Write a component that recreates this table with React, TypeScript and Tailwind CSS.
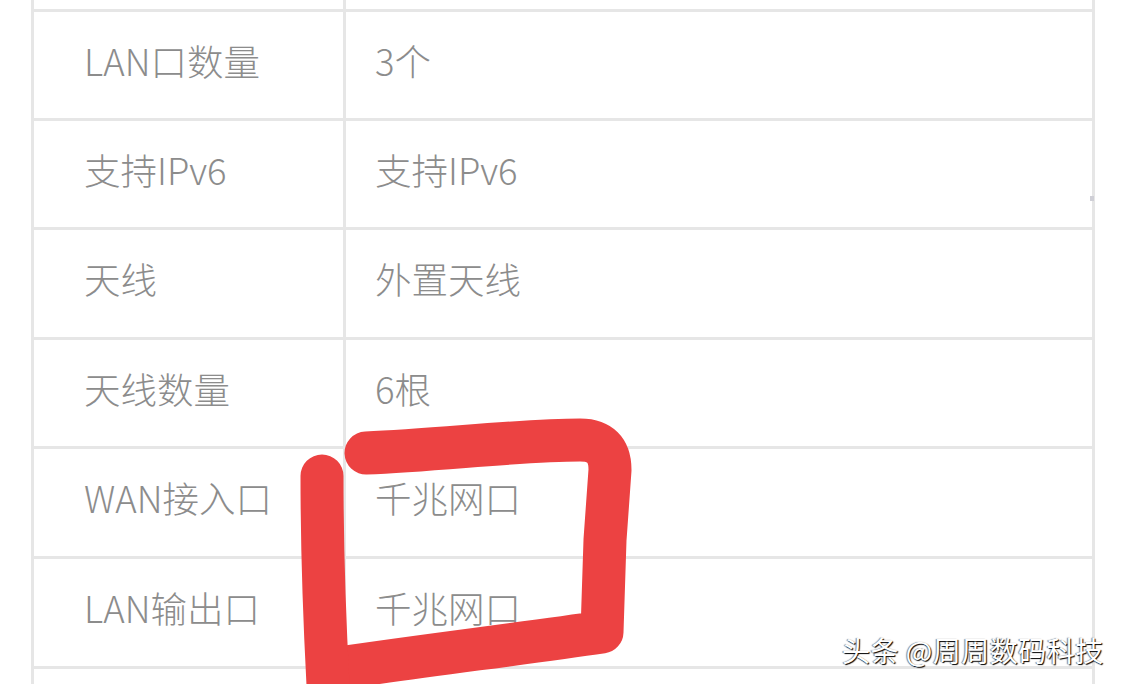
const rows = [
  { label: "LAN口数量", value: "3个", h: "h-[109px]" },
  { label: "支持IPv6", value: "支持IPv6", h: "h-[109px]" },
  { label: "天线", value: "外置天线", h: "h-[110px]" },
  { label: "天线数量", value: "6根", h: "h-[109px]" },
  { label: "WAN接入口", value: "千兆网口", h: "h-[110px]" },
  { label: "LAN输出口", value: "千兆网口", h: "h-[110px]" },
];

const App = () => {
  return (
    <div
      className="relative w-[1125px] h-[684px] overflow-hidden bg-white"
      style={{ fontFamily: '"Noto Sans CJK SC", "Noto Sans", sans-serif' }}
    >
      <div className="ml-[31px] w-[1064px] h-full border-x-[3px] border-[#e6e6e6]">
        {/* tail of the row above */}
        <div className="flex h-[9px]">
          <div className="w-[312px] border-r-[3px] border-[#e6e6e6]" />
        </div>
        {rows.map((row) => (
          <div
            key={row.label + row.h}
            className={`flex border-t-[3px] border-[#e6e6e6] ${row.h}`}
          >
            <div className="flex items-center w-[312px] pl-[50px] pb-[8px] border-r-[3px] border-[#e6e6e6] text-[36.5px] font-light text-[#8c8c8c]">
              {row.label}
            </div>
            <div className="flex items-center flex-1 pl-[29px] pb-[8px] text-[36.5px] font-light text-[#8c8c8c]">
              {row.value}
            </div>
          </div>
        ))}
        <div className="flex border-t-[3px] border-[#e6e6e6] h-[40px]">
          <div className="w-[312px] border-r-[3px] border-[#e6e6e6]" />
        </div>
      </div>

      {/* small scroll mark */}
      <div className="absolute left-[1090px] top-[196px] w-[4px] h-[5px] bg-[#cfcfd6]" />

      {/* red hand-drawn annotation */}
      <svg
        className="absolute left-0 top-0"
        width="1125"
        height="684"
        viewBox="0 0 1125 684"
      >
        <g
          fill="none"
          stroke="#ec4242"
          strokeWidth="43"
          strokeLinecap="round"
          strokeLinejoin="round"
        >
          <path d="M366 453 C 440 450, 520 440, 580 440 Q 610 440 610 470 L 605 540 L 602 632 C 520 644, 420 656, 340 668" />
          <path d="M322 476 C 322 540, 324 620, 330 720" />
        </g>
      </svg>

      {/* watermark */}
      <div className="absolute left-[842px] top-[630px] text-[28px] leading-[40px] tracking-[0.5px] text-white whitespace-nowrap [text-shadow:1px_1px_1px_rgba(0,0,0,1),-1px_0_1px_rgba(0,0,0,0.5)]">
        头条 @周周数码科技
      </div>
    </div>
  );
};

export default App;
